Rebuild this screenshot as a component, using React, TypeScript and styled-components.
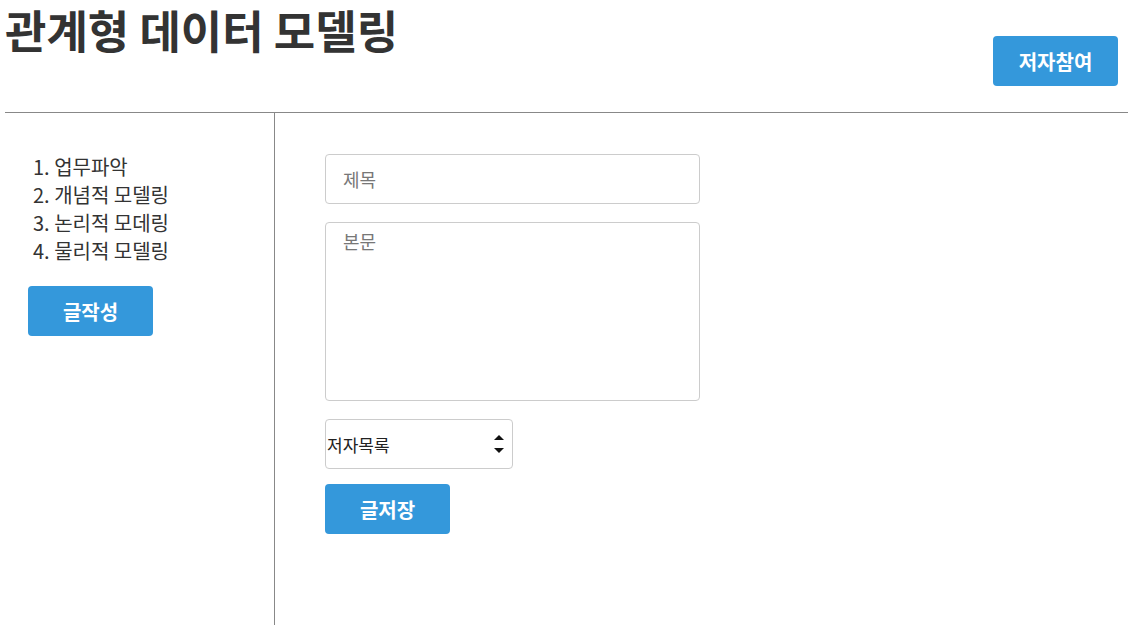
import React from "react";
import styled, { createGlobalStyle } from "styled-components";

const GlobalStyle = createGlobalStyle`
  body {
    margin: 0;
    background: #fff;
    font-family: "Noto Sans CJK KR", "Noto Sans", sans-serif;
    color: #333;
  }
`;

const Page = styled.div`
  padding: 0 0 0 5px;
`;

const Header = styled.header`
  height: 113px;
  box-sizing: border-box;
  border-bottom: 1px solid #888;
  display: flex;
  justify-content: space-between;
  align-items: flex-start;
  padding-right: 10px;
`;

const Title = styled.h1`
  margin: 0;
  font-size: 45px;
  font-weight: 700;
  line-height: 60px;
  color: #333;
`;

const Button = styled.button<{ $top?: number }>`
  width: 125px;
  height: 50px;
  margin-top: ${(p) => p.$top ?? 0}px;
  border: none;
  border-radius: 4px;
  background: #3498db;
  color: #fff;
  font-family: "Noto Sans CJK KR", sans-serif;
  font-size: 20px;
  font-weight: 700;
  cursor: pointer;
`;

const Body = styled.div`
  display: flex;
  height: 512px;
`;

const Sidebar = styled.nav`
  width: 270px;
  border-right: 1px solid #888;
  padding: 40px 0 0 23px;
  box-sizing: border-box;
`;

const MenuList = styled.ul`
  list-style: none;
  margin: 0 0 21px 5px;
  padding: 0;
`;

const MenuItem = styled.li`
  font-size: 20px;
  line-height: 28px;
  color: #333;
`;

const Main = styled.main`
  flex: 1;
  padding: 41px 0 0 50px;
  display: flex;
  flex-direction: column;
  align-items: flex-start;
`;

const Field = styled.input`
  width: 375px;
  height: 50px;
  box-sizing: border-box;
  border: 1px solid #ccc;
  border-radius: 4px;
  padding: 0 17px;
  font-family: "Noto Sans CJK KR", sans-serif;
  font-size: 18px;
  color: #333;
  margin-bottom: 18px;
  &::placeholder {
    color: #777;
  }
`;

const TextArea = styled.textarea`
  width: 375px;
  height: 179px;
  box-sizing: border-box;
  border: 1px solid #ccc;
  border-radius: 4px;
  padding: 5px 17px;
  font-family: "Noto Sans CJK KR", sans-serif;
  font-size: 18px;
  color: #333;
  resize: none;
  margin: 0 0 18px;
  &::placeholder {
    color: #777;
  }
`;

const SelectWrap = styled.div`
  position: relative;
  margin-bottom: 15px;
`;

const Select = styled.select`
  appearance: none;
  width: 188px;
  height: 50px;
  box-sizing: border-box;
  border: 1px solid #ccc;
  border-radius: 4px;
  padding: 0 1px;
  background: #fff;
  font-family: "Noto Sans CJK KR", sans-serif;
  font-size: 17px;
  color: #222;
`;

const Arrows = styled.svg`
  position: absolute;
  right: 8px;
  top: 14px;
  pointer-events: none;
`;

export default function App() {
  return (
    <Page>
      <GlobalStyle />
      <Header>
        <Title>관계형 데이터 모델링</Title>
        <Button $top={36}>저자참여</Button>
      </Header>
      <Body>
        <Sidebar>
          <MenuList>
            <MenuItem>1. 업무파악</MenuItem>
            <MenuItem>2. 개념적 모델링</MenuItem>
            <MenuItem>3. 논리적 모데링</MenuItem>
            <MenuItem>4. 물리적 모델링</MenuItem>
          </MenuList>
          <Button>글작성</Button>
        </Sidebar>
        <Main>
          <Field placeholder="제목" />
          <TextArea placeholder="본문" />
          <SelectWrap>
            <Select defaultValue="a">
              <option value="a">저자목록</option>
            </Select>
            <Arrows width="12" height="22" viewBox="0 0 12 22">
              <path d="M6 2 L11 7 L1 7 Z" fill="#111" />
              <path d="M1 15 L11 15 L6 20 Z" fill="#111" />
            </Arrows>
          </SelectWrap>
          <Button>글저장</Button>
        </Main>
      </Body>
    </Page>
  );
}
